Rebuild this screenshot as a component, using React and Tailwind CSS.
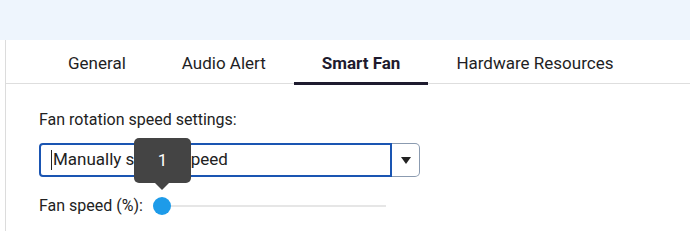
const TABS = ['General', 'Audio Alert', 'Smart Fan', 'Hardware Resources']

export default function App() {
  return (
    <div className="w-[690px] h-[231px] overflow-hidden bg-white text-[#222]" style={{ fontFamily: 'Roboto, "Liberation Sans", sans-serif' }}>
      <div className="h-10 bg-[#eef5fd]" />
      <div className="ml-[5px] border-l border-[#dcdcdc] h-[191px]">
        <div className="flex pl-[34px] border-b border-[#dedede] h-[44px]">
          {TABS.map((t) => (
            <div
              key={t}
              className={
                t === 'Smart Fan'
                  ? 'px-7 flex items-center h-[45px] border-b-[3px] border-[#1e1b2e] font-bold text-[#1e1b2e] text-[17px] pt-[6px]'
                  : 'px-7 flex items-center h-[44px] pt-[3px] text-[17px] text-[#1e1e24]'
              }
            >
              {t}
            </div>
          ))}
        </div>

        <div className="pl-[33px] pt-[26px]">
          <div className="text-base leading-[20px] text-[#222]">Fan rotation speed settings:</div>
          <div className="flex mt-[13px] h-[34px]">
            <div className="w-[353px] border-2 border-[#1a55b2] rounded-l-[4px] flex items-center pl-[10px] text-[17px] text-[#222]">
              <span className="w-px h-[20px] bg-[#222] mr-[1px]" />
              Manually set fan speed
            </div>
            <div className="w-[28px] border border-l-0 border-[#8b9bb0] rounded-r-[5px] flex items-center justify-center">
              <svg width="10" height="7" viewBox="0 0 10 7"><path d="M0 0h10L5 7z" fill="#222" /></svg>
            </div>
          </div>
          <div className="flex items-center mt-[19px] h-[20px]">
            <span className="text-base text-[#222]">Fan speed (%):</span>
            <div className="relative ml-[10px] flex items-center w-[233px] h-[20px]">
              <div className="absolute left-[9px] right-0 h-[2px] bg-[#e6e6e6]" />
              <div className="relative w-[18px] h-[18px] rounded-full bg-[#1d9be9]" />
              <div className="absolute left-[-19px] bottom-[33px] w-[57px] h-[45px] bg-[#444] rounded-[5px] flex items-center justify-center text-white text-[17px]">
                1
                <div className="absolute bottom-[-7px] left-1/2 -translate-x-1/2 w-0 h-0 border-x-[7px] border-x-transparent border-t-[7px] border-t-[#444]" />
              </div>
            </div>
          </div>
        </div>
      </div>
    </div>
  )
}
